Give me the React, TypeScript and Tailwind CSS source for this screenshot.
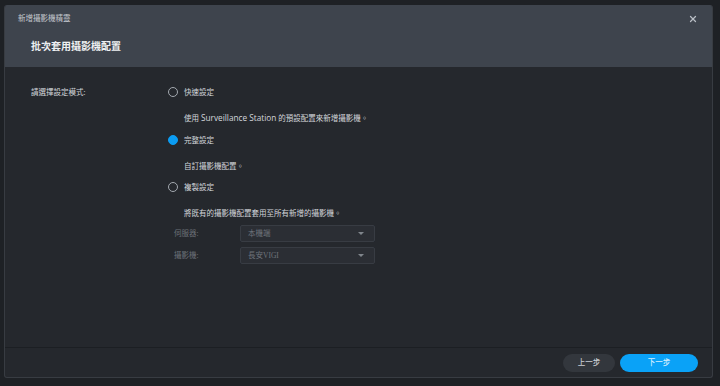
import { X } from "lucide-react";
import type { ReactNode } from "react";

const font = { fontFamily: '"Open Sans", "Noto Sans CJK TC", sans-serif' };

type OptionProps = {
  label: string;
  checked?: boolean;
};

const Radio = ({ label, checked }: OptionProps) => (
  <div className="flex h-[14px] items-center gap-[6px]">
    {checked ? (
      <span className="h-[10px] w-[10px] rounded-full border border-[#0b9cf2] bg-[#0b9cf2]" />
    ) : (
      <span className="h-[10px] w-[10px] rounded-full border-[1.5px] border-[#a3a8af]" />
    )}
    <span className="text-[7.5px] leading-[14px] text-[#d3d6db]">{label}</span>
  </div>
);

const Desc = ({ children }: { children: ReactNode }) => (
  <p className="mt-[12px] h-[14px] pl-[16px] text-[7.5px] leading-[14px] text-[#d3d6db]">
    {children}
  </p>
);

const Select = ({ label, value }: { label: string; value: string }) => (
  <div className="flex items-center">
    <span className="w-[72px] pl-[6px] text-[7.5px] text-[#6c7179]">{label}</span>
    <div className="flex h-[17px] w-[135px] items-center justify-between rounded-[2px] border border-[#383c43] bg-[#2b2e34] pl-[7px] pr-[10px]">
      <span className="text-[7.5px] text-[#6f747c]" style={{ fontFamily: '"Liberation Serif", "Noto Sans CJK TC", serif' }}>
        {value}
      </span>
      <span className="h-0 w-0 border-x-[3px] border-t-[3px] border-x-transparent border-t-[#80858c]" />
    </div>
  </div>
);

const App = () => {
  return (
    <div className="h-[386px] w-[720px] overflow-hidden bg-[#1e2125] pl-[4px] pt-[5px]" style={font}>
      <div className="flex h-[373px] w-[709px] flex-col overflow-hidden rounded-[3px] border-x border-b border-[#383c42] bg-[#25282d]">
        <div className="relative h-[62px] bg-[#3e444d]">
          <p className="pl-[13px] pt-[7px] text-[7.5px] leading-[12px] text-[#c4c8ce]">新增攝影機精靈</p>
          <p className="pl-[26px] pt-[14px] text-[10px] font-bold leading-[16px] text-[#eef0f2]">
            批次套用攝影機配置
          </p>
          <button className="absolute right-[14px] top-[9px] text-[#b9bec5]">
            <X size={10} strokeWidth={3} />
          </button>
        </div>
        <div className="flex flex-1 pl-[26px] pt-[18px]">
          <p className="h-[14px] w-[137px] text-[7.5px] leading-[14px] text-[#d3d6db]">請選擇設定模式:</p>
          <div className="flex flex-col">
            <Radio label="快速設定" />
            <Desc>
              使用 <span className="text-[8.25px]">Surveillance Station</span> 的預設配置來新增攝影機。
            </Desc>
            <div className="mt-[8px]">
              <Radio label="完整設定" checked />
            </div>
            <Desc>自訂攝影機配置。</Desc>
            <div className="mt-[7px]">
              <Radio label="複製設定" />
            </div>
            <Desc>將既有的攝影機配置套用至所有新增的攝影機。</Desc>
            <div className="mt-[5px] flex flex-col gap-[5px]">
              <Select label="伺服器:" value="本機端" />
              <Select label="攝影機:" value="長安VIGI" />
            </div>
          </div>
        </div>
        <div className="flex h-[30px] items-center justify-end gap-[5px] border-t border-[#1c1f23] pr-[14px]">
          <button className="h-[18px] w-[52px] rounded-full bg-[#33373d] text-[7.5px] font-medium text-[#c9cdd3]">
            上一步
          </button>
          <button className="h-[18px] w-[78px] rounded-full bg-[#0aa2f7] text-[7.5px] font-medium text-[#d6efff]">
            下一步
          </button>
        </div>
      </div>
    </div>
  );
};

export default App;
